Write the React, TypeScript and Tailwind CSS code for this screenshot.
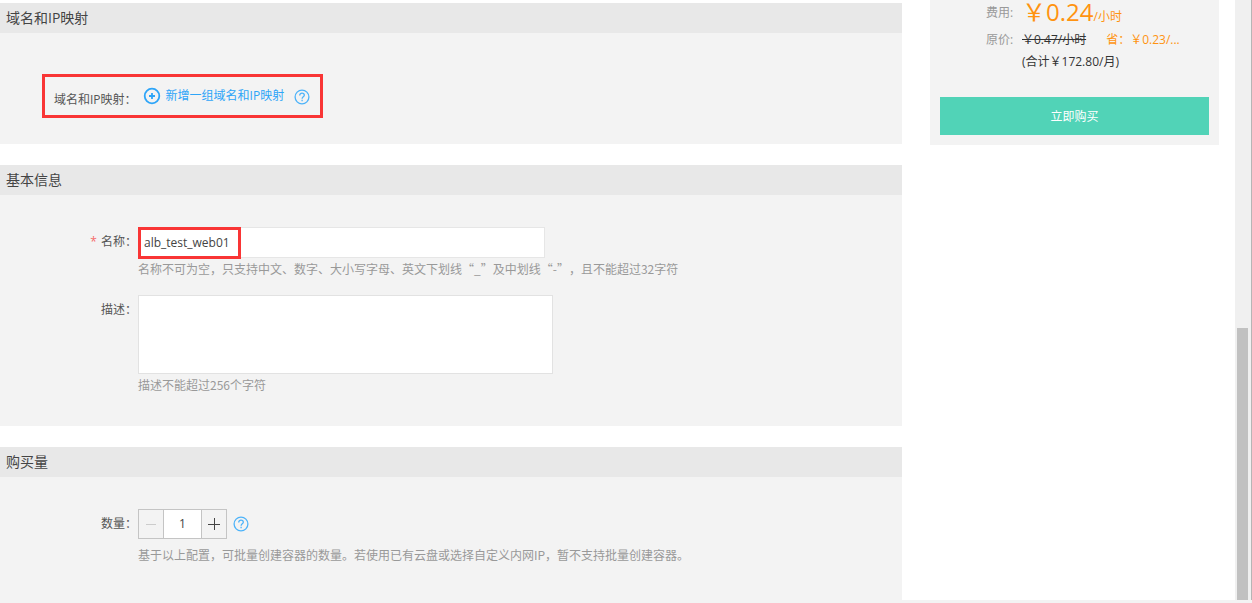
import { useState } from 'react';
import type { ReactNode } from 'react';

function HelpIcon() {
	return (
		<svg viewBox="0 0 16 16" className="size-4 shrink-0" fill="none" stroke="#4db3f9" strokeWidth="1.3" aria-hidden="true">
			<circle cx="8" cy="8" r="6.9" />
			<path d="M5.7 6.4c0-1.4 1-2.2 2.3-2.2s2.3.8 2.3 2c0 1.6-2.2 1.7-2.2 3.5" />
			<path d="M8.1 10.7v1.5" />
		</svg>
	);
}

function AddIcon() {
	return (
		<svg viewBox="0 0 18 18" className="size-[18px] shrink-0" fill="none" stroke="#2ea5f8" strokeWidth="1.8" aria-hidden="true">
			<circle cx="9" cy="9" r="7.3" />
			<path d="M9 6v6M6 9h6" />
		</svg>
	);
}

function Section({ title, children }: { title: string; children: ReactNode }) {
	return (
		<section>
			<h2 className="h-[30px] bg-[#e8e8e8] pl-1.5 text-sm leading-[30px] text-[#444]">{title}</h2>
			{children}
		</section>
	);
}

function Field({ id, label, required, hint, children }: { id: string; label: string; required?: boolean; hint: string; children: ReactNode }) {
	return (
		<div className="flex items-start">
			<label htmlFor={id} className="w-[137px] shrink-0 text-right leading-[30px] text-[#555]">
				{required && <span className="mr-1 text-[#f56a6a]">*</span>}
				{label}：
			</label>
			<div className="ml-px min-w-0 flex-1">
				{children}
				<p className="font-['Noto_Sans_CJK_SC',sans-serif] leading-[22px] text-[#999] [text-spacing-trim:space-all]">{hint}</p>
			</div>
		</div>
	);
}

export default function App() {
	const [name, setName] = useState('alb_test_web01');
	const [count, setCount] = useState(1);

	return (
		<div
			lang="zh-CN"
			className="flex min-h-screen flex-col bg-[#f3f3f3] pb-[3px] font-['Open_Sans','Noto_Sans_CJK_SC',sans-serif] text-xs text-[#333]">
			<div className="flex flex-1 bg-white">
				<main className="flex min-w-0 flex-1 flex-col gap-[21px] bg-white pt-[3px]">
					<Section title="域名和IP映射">
						<div className="bg-[#f3f3f3] pt-[41px] pb-[26px] pl-[42px]">
							<div className="flex h-11 w-[281px] items-center border-3 border-[#f93535] pl-[9px]">
								<span className="mt-2 text-[#555]">域名和IP映射：</span>
								<button type="button" className="ml-1.5 flex items-center gap-[5px] text-[#2ea5f8]">
									<AddIcon />
									新增一组域名和IP映射
								</button>
								<button type="button" aria-label="帮助" className="mt-0.5 ml-2.5">
									<HelpIcon />
								</button>
							</div>
						</div>
					</Section>

					<Section title="基本信息">
						<div className="flex flex-col gap-[15px] bg-[#f3f3f3] pt-8 pb-[30px]">
							<Field
								id="name"
								label="名称"
								required
								hint="名称不可为空，只支持中文、数字、大小写字母、英文下划线“_”及中划线“-”，且不能超过32字符">
								<div className="relative">
									<input
										id="name"
										type="text"
										value={name}
										onChange={(e) => setName(e.target.value)}
										className="block h-[31px] w-[407px] border border-[#e6e6e6] bg-white px-[5px] text-[#444] outline-none"
									/>
									<div className="pointer-events-none absolute top-0 left-0 h-8 w-[103px] border-3 border-[#f93535]" />
								</div>
							</Field>
							<Field id="desc" label="描述" hint="描述不能超过256个字符">
								<textarea id="desc" className="block h-[79px] w-[415px] resize-none border border-[#e2e2e2] bg-white p-1 outline-none" />
							</Field>
						</div>
					</Section>

					<Section title="购买量">
						<div className="bg-[#f3f3f3] pt-8 pb-[34px]">
							<Field id="count" label="数量" hint="基于以上配置，可批量创建容器的数量。若使用已有云盘或选择自定义内网IP，暂不支持批量创建容器。">
								<div className="mb-[5px] flex items-center">
									<div className="flex h-[30px] border border-[#c4c4c4]">
										<button
											type="button"
											aria-label="减少"
											disabled={count <= 1}
											onClick={() => setCount(count - 1)}
											className="flex w-6 items-center justify-center text-[#444] disabled:text-[#ccc]">
											<svg viewBox="0 0 12 12" className="size-3" stroke="currentColor" aria-hidden="true">
												<path d="M1 6.5h10" />
											</svg>
										</button>
										<input
											id="count"
											type="text"
											value={count}
											onChange={(e) => setCount(Number(e.target.value) || 1)}
											className="w-[39px] border-x border-[#c4c4c4] bg-white text-center text-[#444] outline-none"
										/>
										<button
											type="button"
											aria-label="增加"
											onClick={() => setCount(count + 1)}
											className="flex w-6 items-center justify-center text-[#444]">
											<svg viewBox="0 0 12 12" className="size-3" stroke="currentColor" aria-hidden="true">
												<path d="M0 6.5h12M6.5 0v12" />
											</svg>
										</button>
									</div>
									<button type="button" aria-label="帮助" className="ml-1.5">
										<HelpIcon />
									</button>
								</div>
							</Field>
						</div>
					</Section>
				</main>

				<aside className="mr-4 ml-7 w-[289px] shrink-0">
					<div className="bg-[#f3f3f3] px-[10px] pb-[10px]">
						<dl className="grid grid-cols-[36px_1fr] pl-[46px]">
							<dt className="leading-[26px] text-[#999]">费用:</dt>
							<dd className="h-[26px] leading-6 whitespace-nowrap text-[#ff9311]">
								<span className="text-2xl leading-6">￥0.24</span>/小时
							</dd>
							<dt className="leading-7 text-[#999]">原价:</dt>
							<dd className="flex gap-5 leading-7 whitespace-nowrap">
								<del>￥0.47/小时</del>
								<span className="text-[#ff9311]">省：￥0.23/...</span>
							</dd>
							<dd className="col-start-2 leading-4">(合计￥172.80/月)</dd>
						</dl>
						<button type="button" className="mt-[27px] h-[38px] w-full bg-[#51d3b7] pt-0.5 text-white">
							立即购买
						</button>
					</div>
				</aside>

				{/* scroll track */}
				<div className="flex w-[17px] shrink-0 flex-col justify-end border-r border-[#b5b5b5] bg-[#f0f0f0] pr-[3px] pl-0.5">
					<div className="h-[272px] bg-[#c1c1c1]" />
				</div>
			</div>
		</div>
	);
}
